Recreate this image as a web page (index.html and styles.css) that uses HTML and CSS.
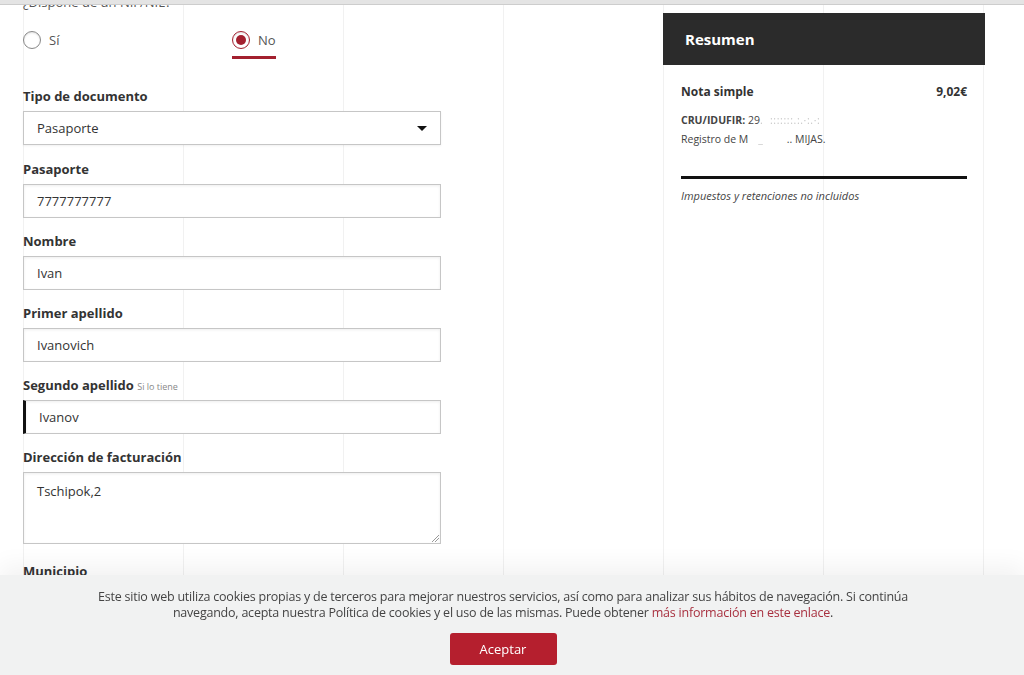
FILE: index.html
```html
<!DOCTYPE html>
<html lang="es">
<head>
  <meta charset="UTF-8" />
  <meta name="viewport" content="width=device-width, initial-scale=1.0"/>
  <title>Datos de facturación</title>
  <link rel="stylesheet" href="styles.css">
</head>
<body>
  <div class="topbar"></div>

  <div class="page">
    <!-- Formulario -->
    <div class="form-col">
      <div class="question">¿Dispone de un NIF/NIE?</div>
      <div class="radio-row">
        <label class="radio-opt"><span class="radio"></span>Sí</label>
        <label class="radio-opt checked"><span class="radio"></span>No</label>
      </div>

      <div class="field first">
        <div class="label">Tipo de documento</div>
        <div class="select">Pasaporte<span class="caret"></span></div>
      </div>

      <div class="field">
        <div class="label">Pasaporte</div>
        <div class="input">7777777777</div>
      </div>

      <div class="field">
        <div class="label">Nombre</div>
        <div class="input">Ivan</div>
      </div>

      <div class="field">
        <div class="label">Primer apellido</div>
        <div class="input">Ivanovich</div>
      </div>

      <div class="field">
        <div class="label">Segundo apellido <span class="hint">Si lo tiene</span></div>
        <div class="input focused">Ivanov</div>
      </div>

      <div class="field tall">
        <div class="label">Dirección de facturación</div>
        <div class="input textarea">Tschipok,2<span class="grip"></span></div>
      </div>

      <div class="field">
        <div class="label">Municipio</div>
        <div class="input"></div>
      </div>
    </div>

    <!-- Resumen -->
    <div class="summary">
      <div class="summary-head">Resumen</div>
      <div class="summary-body">
        <div class="summary-row">
          <span>Nota simple</span>
          <span>9,02€</span>
        </div>
        <div class="summary-meta">
          <div><b>CRU/IDUFIR:</b> 29<span class="blur">.&nbsp;&nbsp;:::::::.:.·:.·:</span></div>
          <div>Registro de M<span class="blur">&nbsp;&nbsp;&nbsp;_&nbsp;&nbsp;&nbsp;&nbsp;&nbsp;&nbsp;&nbsp;</span>.. MIJAS.</div>
        </div>
        <div class="summary-note">Impuestos y retenciones no incluidos</div>
      </div>
    </div>
  </div>

  <div class="cookies">
    <p>Este sitio web utiliza cookies propias y de terceros para mejorar nuestros servicios, así como para analizar sus hábitos de navegación. Si continúa<br>
    navegando, acepta nuestra Política de cookies y el uso de las mismas. Puede obtener <a href="#">más información en este enlace</a>.</p>
    <button class="accept">Aceptar</button>
  </div>
</body>
</html>
```

FILE: styles.css
```css
body {
  margin: 0;
  font-family: "Open Sans", "Noto Sans", sans-serif;
  color: #333;
  background-color: #fff;
  background-image: repeating-linear-gradient(to right, #f1f1f1 0 1px, transparent 1px 160px);
  background-position: 23px 0;
  height: 675px;
  overflow: hidden;
}
.topbar {
  position: fixed;
  top: 0;
  left: 0;
  right: 0;
  height: 4px;
  background: #e4e4e4;
  border-bottom: 1px solid #cdcdcd;
  z-index: 5;
}
.page {
  display: flex;
  gap: 222px;
  padding-left: 23px;
  margin-top: -7px;
}
.form-col {
  width: 418px;
}
.question {
  font-size: 13px;
  line-height: 18px;
  color: #555;
}
.radio-row {
  display: flex;
  margin-top: 19px;
}
.radio-opt {
  width: 50%;
  display: flex;
  align-items: center;
  font-size: 13px;
  line-height: 20px;
  color: #555;
}
.radio {
  width: 16px;
  height: 16px;
  border: 1px solid #888;
  border-radius: 50%;
  margin-right: 8px;
  box-shadow: inset 0 1px 2px rgba(0,0,0,0.12);
  position: relative;
}
.radio-opt.checked {
  flex: none;
  width: auto;
  padding-bottom: 6px;
  margin-bottom: -9px;
  border-bottom: 3px solid #a3202f;
}
.radio-opt.checked .radio {
  border-color: #a3202f;
}
.radio-opt.checked .radio::after {
  content: "";
  position: absolute;
  left: 3px;
  top: 3px;
  width: 10px;
  height: 10px;
  border-radius: 50%;
  background: #a3202f;
}
.field {
  margin-bottom: 14px;
}
.field.first {
  margin-top: 37px;
  margin-bottom: 15px;
}
.field.tall {
  margin-bottom: 18px;
}
.label {
  font-size: 13px;
  line-height: 18px;
  font-weight: 700;
  margin-bottom: 6px;
  color: #333;
}
.hint {
  font-size: 9px;
  line-height: 1;
  font-weight: 400;
  color: #888;
}
.input, .select {
  box-sizing: border-box;
  height: 34px;
  border: 1px solid #c6c6c6;
  box-shadow: inset 0 1px 3px rgba(0,0,0,0.07);
  font-size: 13px;
  line-height: 32px;
  padding-left: 13px;
  color: #333;
  position: relative;
  background: #fff;
}
.select {
  box-shadow: 0 1px 2px rgba(0,0,0,0.06);
}
.caret {
  position: absolute;
  right: 13px;
  top: 14px;
  border-left: 5px solid transparent;
  border-right: 5px solid transparent;
  border-top: 5px solid #111;
}
.input.focused {
  border-left: 3px solid #111;
  padding-left: 13px;
}
.input.textarea {
  height: 72px;
  line-height: 18px;
  padding-top: 9px;
}
.grip {
  position: absolute;
  right: 1px;
  bottom: 1px;
  width: 7px;
  height: 7px;
  background: linear-gradient(135deg, transparent 0 45%, #999 45% 52%, transparent 52% 70%, #999 70% 77%, transparent 77%);
}
.summary {
  width: 322px;
  margin-top: 20px;
}
.summary-head {
  height: 52px;
  background: #2b2b2b;
  color: #fff;
  font-size: 15px;
  font-weight: 700;
  line-height: 52px;
  padding-left: 22px;
}
.summary-body {
  padding: 18px 18px;
}
.summary-row {
  display: flex;
  justify-content: space-between;
  font-size: 12px;
  font-weight: 700;
  line-height: 18px;
}
.summary-meta {
  margin-top: 10px;
  font-size: 10.5px;
  line-height: 19px;
  color: #444;
}
.blur {
  color: #c8c8c8;
  filter: blur(0.5px);
  letter-spacing: 0.6px;
}
.summary-note {
  margin-top: 27px;
  border-top: 3px solid #111;
  padding-top: 8px;
  font-size: 11px;
  line-height: 18px;
  font-style: italic;
  color: #444;
}
.cookies {
  position: fixed;
  left: 0;
  right: 0;
  bottom: 0;
  height: 100px;
  box-sizing: border-box;
  background: #f1f2f2;
  box-shadow: 0 -10px 22px rgba(0,0,0,0.05);
  text-align: center;
  padding: 14px 18px 0 0;
  z-index: 10;
}
.cookies p {
  margin: 0;
  font-size: 12.5px;
  line-height: 16px;
  color: #444;
  letter-spacing: -0.22px;
}
.cookies a {
  color: #a8303f;
  text-decoration: none;
}
.accept {
  margin-top: 12px;
  width: 107px;
  height: 32px;
  border: none;
  border-radius: 3px;
  background: #b51f2e;
  color: #fff;
  font-family: "Open Sans", sans-serif;
  font-size: 13px;
  cursor: pointer;
}
```
